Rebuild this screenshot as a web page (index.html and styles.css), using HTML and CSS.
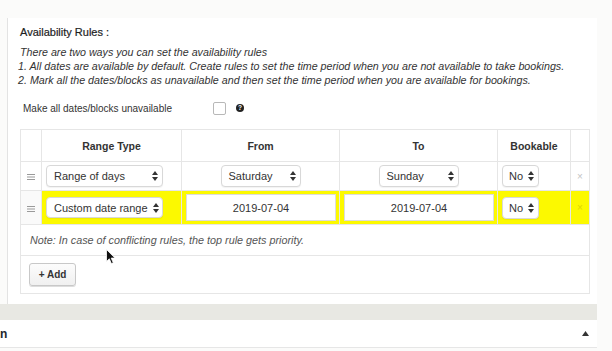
FILE: index.html
```html
<!DOCTYPE html>
<html lang="en">
<head>
  <meta charset="UTF-8">
  <title>Availability Rules</title>
  <link rel="stylesheet" href="styles.css">
</head>
<body>
  <div class="page">
    <div class="panel">
      <h3 class="rules-title">Availability Rules :</h3>

      <!-- Help text -->
      <div class="rules-help">
        <p>There are two ways you can set the availability rules</p>
        <p>1. All dates are available by default. Create rules to set the time period when you are not available to take bookings.</p>
        <p>2. Mark all the dates/blocks as unavailable and then set the time period when you are available for bookings.</p>
      </div>

      <div class="make-all">
        <label>Make all dates/blocks unavailable</label>
        <span class="checkbox"></span>
        <span class="help-tip">?</span>
      </div>

      <!-- Rules table -->
      <table class="rules">
        <colgroup>
          <col class="col-drag">
          <col class="col-type">
          <col class="col-from">
          <col class="col-to">
          <col class="col-bookable">
          <col class="col-remove">
        </colgroup>
        <thead>
          <tr>
            <th></th>
            <th>Range Type</th>
            <th>From</th>
            <th>To</th>
            <th>Bookable</th>
            <th></th>
          </tr>
        </thead>
        <tbody>
          <tr class="rule-row">
            <td class="drag"><svg width="8" height="6" viewBox="0 0 8 6"><path d="M0 0.5h8M0 3h8M0 5.5h8" stroke="#9a9a9a" stroke-width="1.2"/></svg></td>
            <td><div class="select select-type"><span>Range of days</span><svg class="arrows" width="6" height="10" viewBox="0 0 6 10"><path d="M0 4L3 0L6 4ZM0 6L3 10L6 6Z" fill="#333"/></svg></div></td>
            <td class="center"><div class="select select-day"><span>Saturday</span><svg class="arrows" width="6" height="10" viewBox="0 0 6 10"><path d="M0 4L3 0L6 4ZM0 6L3 10L6 6Z" fill="#333"/></svg></div></td>
            <td class="center"><div class="select select-day"><span>Sunday</span><svg class="arrows" width="6" height="10" viewBox="0 0 6 10"><path d="M0 4L3 0L6 4ZM0 6L3 10L6 6Z" fill="#333"/></svg></div></td>
            <td><div class="select select-bool"><span>No</span><svg class="arrows" width="6" height="10" viewBox="0 0 6 10"><path d="M0 4L3 0L6 4ZM0 6L3 10L6 6Z" fill="#333"/></svg></div></td>
            <td class="remove">×</td>
          </tr>
          <tr class="rule-row highlight">
            <td class="drag"><svg width="8" height="6" viewBox="0 0 8 6"><path d="M0 0.5h8M0 3h8M0 5.5h8" stroke="#9a9a9a" stroke-width="1.2"/></svg></td>
            <td><div class="select select-type"><span>Custom date range</span><svg class="arrows" width="6" height="10" viewBox="0 0 6 10"><path d="M0 4L3 0L6 4ZM0 6L3 10L6 6Z" fill="#333"/></svg></div></td>
            <td class="date-cell"><input class="date-input" type="text" value="2019-07-04" readonly></td>
            <td class="date-cell"><input class="date-input" type="text" value="2019-07-04" readonly></td>
            <td><div class="select select-bool"><span>No</span><svg class="arrows" width="6" height="10" viewBox="0 0 6 10"><path d="M0 4L3 0L6 4ZM0 6L3 10L6 6Z" fill="#333"/></svg></div></td>
            <td class="remove">×</td>
          </tr>
        </tbody>
        <tfoot>
          <tr class="note-row">
            <td colspan="6">Note: In case of conflicting rules, the top rule gets priority.</td>
          </tr>
          <tr class="add-row">
            <td colspan="6"><button class="add-btn">+ Add</button></td>
          </tr>
        </tfoot>
      </table>
    </div>

    <div class="band"></div>

    <div class="postbox">
      <span class="postbox-title">n</span>
      <svg width="7" height="5" viewBox="0 0 7 5"><path d="M0 5L3.5 0L7 5Z" fill="#333"/></svg>
    </div>
  </div>

  <!-- mouse pointer captured in the screenshot -->
  <svg class="cursor" width="10" height="16" viewBox="0 0 10 16"><path d="M0.5 0.5L0.5 12.5L3.3 9.8L5.4 14.6L7.3 13.8L5.2 9.1L9 9.1Z" fill="#111" stroke="#fff" stroke-width="0.8"/></svg>
</body>
</html>
```

FILE: styles.css
```css
/* General */
body {
  margin: 0;
  background-color: #fbfbfa;
  color: #333;
  font-family: "Liberation Sans", Arial, sans-serif;
}
.page {
  width: 597px;
  padding-top: 18px;
}

/* Availability panel */
.panel {
  margin-left: 7px;
  padding: 7px 8px 10px 12px;
  background-color: #fff;
  border-left: 1px solid #e3e3e3;
}
.rules-title {
  margin: 0 0 6px 0;
  font-size: 11px;
  font-weight: normal;
  line-height: 14px;
  color: #1e1e1e;
  -webkit-text-stroke: 0.2px #1e1e1e;
}
.rules-help p {
  margin: 0;
  font-size: 10.7px;
  font-style: italic;
  line-height: 14px;
  color: #333;
}
.rules-help p + p {
  margin-left: -2px;
}

.make-all {
  display: flex;
  align-items: center;
  height: 16px;
  margin: 13px 0 13px 3px;
  font-size: 10px;
  color: #333;
}
.make-all label {
  width: 190px;
}
.checkbox {
  width: 11px;
  height: 11px;
  border: 1px solid #b8b8b8;
  border-radius: 2px;
  background-color: #fff;
}
.help-tip {
  width: 8px;
  height: 8px;
  margin-left: 10px;
  border-radius: 50%;
  background-color: #222;
  color: #fff;
  font-size: 6.5px;
  font-weight: bold;
  line-height: 8px;
  text-align: center;
}

/* Rules table */
.rules {
  width: 569px;
  table-layout: fixed;
  border-collapse: collapse;
  border: 1px solid #e1e1e1;
  font-size: 11px;
}
.col-drag { width: 21px; }
.col-type { width: 140px; }
.col-from { width: 158px; }
.col-to { width: 158px; }
.col-bookable { width: 73px; }
.col-remove { width: 19px; }

.rules th,
.rules td {
  border: 1px solid #e6e6e6;
  padding: 0 4px;
}
.rules thead tr {
  height: 32px;
}
.rules th {
  font-size: 10.5px;
  font-weight: bold;
  color: #333;
  text-align: center;
}
.rule-row {
  height: 29px;
}
.rule-row.highlight {
  height: 34px;
}
.highlight td {
  background-color: #fcf900;
}
.highlight td.drag {
  background-color: #fafafa;
}
.rules td.drag {
  padding: 0;
  text-align: center;
}
.rules td.center {
  text-align: center;
}
.rules td.remove {
  padding: 0;
  text-align: center;
  color: #c4c4c4;
  font-size: 10px;
}
.highlight td.remove {
  color: #dcd800;
}

/* Select look-alikes */
.select {
  display: inline-flex;
  align-items: center;
  justify-content: space-between;
  box-sizing: border-box;
  height: 22px;
  padding: 0 4px 0 7px;
  border: 1px solid #d8d8d8;
  border-radius: 4px;
  background-color: #fff;
  box-shadow: 0 1px 1px rgba(0, 0, 0, 0.05);
  color: #333;
  vertical-align: middle;
  text-align: left;
}
.select-type {
  width: 117px;
}
.highlight .select-type {
  height: 21px;
  padding-right: 3px;
}
.select-day {
  width: 80px;
}
.select-bool {
  width: 37px;
  padding-left: 6px;
}

/* Date inputs */
.rules td.date-cell {
  padding: 0 3px 0 4px;
}
.date-input {
  display: block;
  box-sizing: border-box;
  width: 100%;
  height: 27px;
  border: 1px solid #dcdcdc;
  background-color: #fff;
  font-family: "Liberation Sans", Arial, sans-serif;
  font-size: 11px;
  color: #333;
  text-align: center;
}

/* Footer rows */
.note-row {
  height: 31px;
}
.note-row td {
  padding-left: 9px;
  font-size: 10.8px;
  font-style: italic;
  color: #555;
}
.add-row {
  height: 38px;
}
.add-row td {
  padding-left: 8px;
}
.add-btn {
  width: 47px;
  height: 23px;
  padding: 0;
  border: 1px solid #c8c8c8;
  border-radius: 3px;
  background: linear-gradient(#fcfcfc, #f0f0f0);
  box-shadow: 0 1px 0 #ddd;
  font-family: "Liberation Sans", Arial, sans-serif;
  font-size: 10px;
  font-weight: bold;
  color: #333;
}

/* Bottom of the screen */
.band {
  height: 16px;
  background-color: #e8e8e3;
}
.postbox {
  display: flex;
  align-items: center;
  justify-content: space-between;
  height: 27px;
  padding-right: 8px;
  background-color: #fff;
  border-bottom: 1px solid #e6e6e6;
}
.postbox-title {
  font-size: 12px;
  font-weight: bold;
  color: #23282d;
}

.cursor {
  position: absolute;
  left: 106px;
  top: 249px;
}
```
